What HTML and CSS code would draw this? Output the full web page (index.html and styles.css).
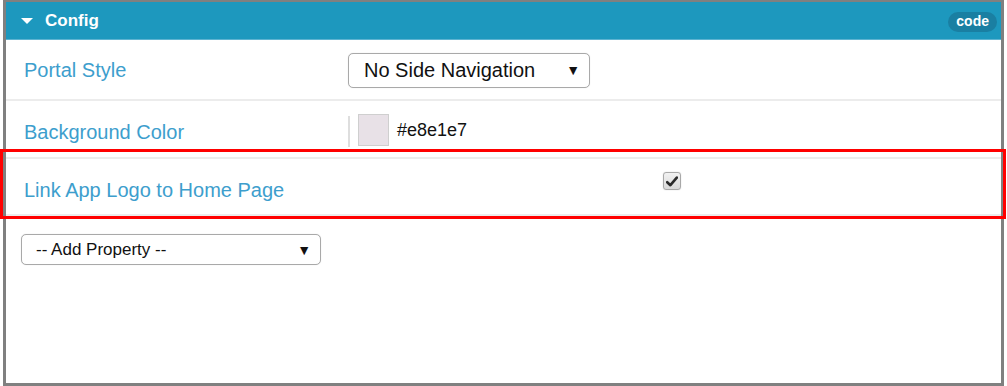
FILE: index.html
```html
<!DOCTYPE html>
<html>
<head>
<meta charset="utf-8">
<link rel="stylesheet" href="styles.css">
</head>
<body>
<div class="frame">
  <div class="header">
    <div class="title"><span class="caret"></span>Config</div>
    <span class="badge">code</span>
  </div>
  <div class="row row-style">
    <div class="label">Portal Style</div>
    <div class="control">
      <div class="select select-style"><span>No Side Navigation</span><span class="arrow">&#9660;</span></div>
    </div>
  </div>
  <div class="row row-color">
    <div class="label">Background Color</div>
    <div class="control color-control">
      <span class="divider"></span>
      <span class="swatch"></span>
      <span class="hex">#e8e1e7</span>
    </div>
  </div>
  <div class="row row-link">
    <div class="label">Link App Logo to Home Page</div>
    <div class="control check-control">
      <span class="checkbox">
        <svg width="12" height="11" viewBox="0 0 12 11"><path d="M1.2 6.2 L4.4 9.2 L10.8 1.6" fill="none" stroke="#2b2b2b" stroke-width="2.6" stroke-linecap="round" stroke-linejoin="round"/></svg>
      </span>
    </div>
  </div>
  <div class="add">
    <div class="select select-add"><span>-- Add Property --</span><span class="arrow">&#9660;</span></div>
  </div>
</div>
<div class="highlight"></div>
</body>
</html>
```
FILE: styles.css
```css
html, body {
  margin: 0;
  padding: 0;
  background: #ffffff;
}
body {
  position: relative;
  width: 1007px;
  height: 386px;
  overflow: hidden;
  font-family: "Liberation Sans", Arial, sans-serif;
}
.frame {
  box-sizing: border-box;
  margin-left: 3px;
  width: 1001px;
  height: 386px;
  border-style: solid;
  border-color: #808080;
  border-width: 2px 3px 3px 3px;
  background: #ffffff;
}
.header {
  height: 37px;
  background: #1d98be;
  border-bottom: 1px solid #5db3d1;
  display: flex;
  align-items: center;
  justify-content: space-between;
  padding: 0 4px 0 15px;
}
.title {
  display: flex;
  align-items: center;
  color: #ffffff;
  font-weight: bold;
  font-size: 17px;
}
.caret {
  width: 0;
  height: 0;
  border-left: 6px solid transparent;
  border-right: 6px solid transparent;
  border-top: 6px solid #ffffff;
  margin-right: 12px;
  margin-top: 1px;
}
.badge {
  background: #1a7fa2;
  color: #ffffff;
  font-weight: bold;
  font-size: 14px;
  border-radius: 10px;
  height: 20px;
  line-height: 19px;
  padding: 0 8px;
  margin-top: 2px;
}
.row {
  display: grid;
  grid-template-columns: 342px 1fr;
  align-items: center;
  border-bottom: 2px solid #ececec;
}
.label {
  padding-left: 18px;
  color: #3d9ecd;
  font-size: 20px;
}
.row-style {
  height: 61px;
  padding-top: 1px;
  box-sizing: border-box;
}
.row-color {
  height: 58px;
  box-sizing: border-box;
  padding-top: 6px;
}
.row-link {
  height: 57px;
  box-sizing: border-box;
  padding-top: 8px;
}
.select {
  box-sizing: border-box;
  display: flex;
  align-items: center;
  justify-content: space-between;
  border: 1px solid #a9a9a9;
  border-radius: 5px;
  color: #111111;
  background: #ffffff;
  box-shadow: 0 0 1px #d8d8d8;
}
.select-style {
  width: 242px;
  height: 35px;
  padding: 0 9px 0 15px;
  font-size: 20px;
}
.arrow {
  font-size: 14px;
  color: #111111;
}
.color-control {
  display: flex;
  align-items: center;
  margin-top: -4px;
}
.divider {
  width: 2px;
  height: 31px;
  background: #dedede;
  margin-top: 2px;
}
.swatch {
  box-sizing: border-box;
  width: 31px;
  height: 32px;
  margin-left: 8px;
  background: #e8e1e7;
  border: 1px solid #cfcfcf;
}
.hex {
  margin-left: 8px;
  font-size: 18px;
  color: #111111;
}
.check-control {
  padding-left: 315px;
  align-self: start;
  padding-top: 5px;
}
.checkbox {
  box-sizing: border-box;
  display: flex;
  align-items: center;
  justify-content: center;
  width: 18px;
  height: 18px;
  border: 1px solid #a8a8a8;
  border-radius: 3px;
  background: linear-gradient(#f2f2f2, #dadada);
  box-shadow: 0 0 1px #bbbbbb;
}
.add {
  padding: 18px 0 0 15px;
}
.select-add {
  width: 300px;
  height: 31px;
  padding: 0 9px 0 14px;
  font-size: 17px;
}
.highlight {
  position: absolute;
  left: 0;
  top: 149px;
  width: 1006px;
  height: 70px;
  box-sizing: border-box;
  border: 3px solid #ff0000;
}
```
